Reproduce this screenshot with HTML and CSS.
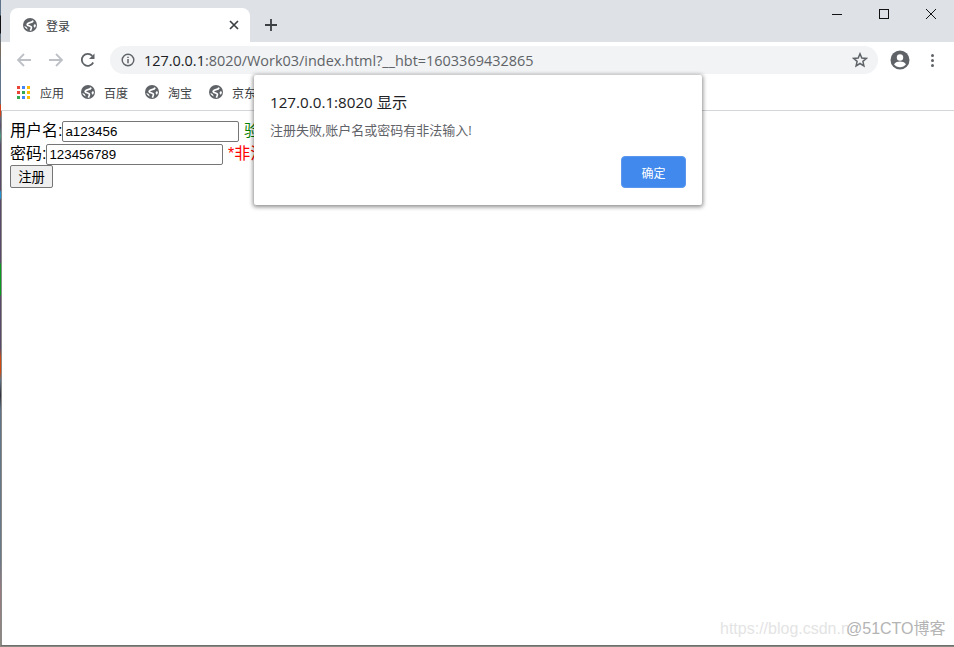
FILE: index.html
```html
<!DOCTYPE html>
<html lang="zh-CN">
<head>
    <meta charset="UTF-8">
    <title>登录</title>
    <link rel="stylesheet" href="styles.css">
</head>
<body>
    <div class="window">
        <div class="tabstrip">
            <div class="tab">
                <svg class="globe" viewBox="0 0 16 16"><circle cx="8" cy="8" r="8" fill="#5f6368"/><path d="M11.500 3C10.500 6 6.500 4.800 5 6.800 3.800 9 8 8.500 9.500 10.300 10.200 11.500 9 13 8.300 14.500" fill="none" stroke="#fff" stroke-width="2"/><path d="M13 7.200l1.800.5c0 1.300-.4 2.400-1.200 3.500-1-.5-1.500-1.300-1.500-2.200 0-.8.300-1.400.9-1.800zM1.500 9.500c1.700-.2 3.400.8 3.800 3.500-1.800-.6-3.200-1.900-3.800-3.500z" fill="#fff"/></svg>
                <span class="tab-title">登录</span>
                <svg class="tab-close" viewBox="0 0 10 10"><path d="M1 1l8 8M9 1l-8 8" stroke="#3c4043" stroke-width="1.700"/></svg>
            </div>
            <svg class="new-tab" viewBox="0 0 12 12"><path d="M6 0v12M0 6h12" stroke="#3c4043" stroke-width="1.800"/></svg>
            <div class="win-controls">
                <svg viewBox="0 0 12 12"><path d="M1 6.500h10" stroke="#111" stroke-width="1"/></svg>
                <svg viewBox="0 0 12 12"><rect x="1.500" y="1.500" width="9" height="9" fill="none" stroke="#111" stroke-width="1"/></svg>
                <svg viewBox="0 0 12 12"><path d="M1 1l10 10M11 1l-10 10" stroke="#111" stroke-width="1"/></svg>
            </div>
        </div>

        <div class="toolbar">
            <svg class="nav-icon" viewBox="0 0 16 16"><path d="M15 8H2M8 2L2 8l6 6" fill="none" stroke="#bdc1c6" stroke-width="1.800"/></svg>
            <svg class="nav-icon" viewBox="0 0 16 16"><path d="M1 8h13M8 2l6 6-6 6" fill="none" stroke="#bdc1c6" stroke-width="1.800"/></svg>
            <svg class="nav-icon" viewBox="0 0 16 16"><path d="M13.200 10.500A6 6 0 1 1 12.300 3.800" fill="none" stroke="#5f6368" stroke-width="1.800"/><path d="M14.500 1.500v5.500H9z" fill="#5f6368"/></svg>
            <div class="omnibox">
                <svg class="info" viewBox="0 0 14 14"><circle cx="7" cy="7" r="5.800" fill="none" stroke="#5f6368" stroke-width="1.400"/><path d="M7 6v4.200M7 3.700v1.400" stroke="#5f6368" stroke-width="1.500"/></svg>
                <span class="url">127.0.0.1<span class="url-rest">:8020/Work03/index.html?__hbt=1603369432865</span></span>
                <svg class="star" viewBox="0 0 16 16"><path d="M8 1.800l1.800 4.200 4.600.4-3.500 3 1 4.500L8 11.500l-3.900 2.400 1-4.500-3.500-3 4.600-.4z" fill="none" stroke="#5f6368" stroke-width="1.500"/></svg>
            </div>
            <svg class="avatar" viewBox="0 0 20 20"><circle cx="10" cy="10" r="9.500" fill="#5f6368"/><circle cx="10" cy="7.500" r="3.200" fill="#fff"/><path d="M4 14.200c1.400-2 3.700-2.700 6-2.700s4.600.7 6 2.700c-1.400 1.800-3.600 3-6 3s-4.600-1.200-6-3z" fill="#fff"/></svg>
            <div class="menu-dots"><i></i><i></i><i></i></div>
        </div>

        <div class="bookmarks">
            <div class="bookmark">
                <div class="apps">
                    <i class="c-r"></i><i class="c-b"></i><i class="c-y"></i>
                    <i class="c-r"></i><i class="c-g"></i><i class="c-y"></i>
                    <i class="c-g"></i><i class="c-b"></i><i class="c-y"></i>
                </div>
                <span>应用</span>
            </div>
            <div class="bookmark">
                <svg class="globe" viewBox="0 0 16 16"><circle cx="8" cy="8" r="8" fill="#5f6368"/><path d="M11.500 3C10.500 6 6.500 4.800 5 6.800 3.800 9 8 8.500 9.500 10.300 10.200 11.500 9 13 8.300 14.500" fill="none" stroke="#fff" stroke-width="2"/><path d="M13 7.200l1.800.5c0 1.300-.4 2.400-1.200 3.500-1-.5-1.500-1.300-1.500-2.200 0-.8.300-1.400.9-1.800zM1.500 9.500c1.700-.2 3.400.8 3.800 3.500-1.800-.6-3.200-1.900-3.800-3.500z" fill="#fff"/></svg>
                <span>百度</span>
            </div>
            <div class="bookmark">
                <svg class="globe" viewBox="0 0 16 16"><circle cx="8" cy="8" r="8" fill="#5f6368"/><path d="M11.500 3C10.500 6 6.500 4.800 5 6.800 3.800 9 8 8.500 9.500 10.300 10.200 11.500 9 13 8.300 14.500" fill="none" stroke="#fff" stroke-width="2"/><path d="M13 7.200l1.800.5c0 1.300-.4 2.400-1.200 3.500-1-.5-1.500-1.300-1.500-2.200 0-.8.300-1.400.9-1.800zM1.500 9.500c1.700-.2 3.400.8 3.800 3.500-1.800-.6-3.200-1.900-3.800-3.500z" fill="#fff"/></svg>
                <span>淘宝</span>
            </div>
            <div class="bookmark">
                <svg class="globe" viewBox="0 0 16 16"><circle cx="8" cy="8" r="8" fill="#5f6368"/><path d="M11.500 3C10.500 6 6.500 4.800 5 6.800 3.800 9 8 8.500 9.500 10.300 10.200 11.500 9 13 8.300 14.500" fill="none" stroke="#fff" stroke-width="2"/><path d="M13 7.200l1.800.5c0 1.300-.4 2.400-1.200 3.500-1-.5-1.500-1.300-1.500-2.200 0-.8.300-1.400.9-1.800zM1.500 9.500c1.700-.2 3.400.8 3.800 3.500-1.800-.6-3.200-1.900-3.800-3.500z" fill="#fff"/></svg>
                <span>京东</span>
            </div>
        </div>

        <div class="page">
            <form class="reg-form">
                <div class="row row-user">用户名:<input type="text" class="field field-user" value="a123456"> <span class="ok">验</span></div>
                <div class="row">密码:<input type="text" class="field field-pass" value="123456789"> <span class="err">*非法</span></div>
                <button type="button" class="submit">注册</button>
            </form>
            <div class="mark-csdn">https://blog.csdn.n</div>
            <div class="mark-cto">@51CTO博客</div>
        </div>

        <div class="dialog">
            <div class="dialog-title">127.0.0.1:8020 显示</div>
            <div class="dialog-msg">注册失败,账户名或密码有非法输入!</div>
            <div class="dialog-foot"><button type="button" class="ok-btn">确定</button></div>
        </div>
    </div>
</body>
</html>
```
FILE: styles.css
```css
* {
    margin: 0;
    padding: 0;
    box-sizing: border-box;
}

html, body {
    width: 954px;
    height: 647px;
    overflow: hidden;
}

body {
    padding: 0 0 1px 1px;
    font-family: "Liberation Sans", "Noto Sans CJK SC", sans-serif;
    background: linear-gradient(180deg, #5f7488 0, #5f7488 15px, #111 16px, #111 33px, #5f7488 34px, #7a6a5a 50px, #5f7488 70px, #5f7488 104px, #d0401a 105px, #d0401a 115px, #5f6a80 118px, #5a4a6a 126px, #4a9a80 136px, #5a4a6a 145px, #5a4a6a 190px, #2090d0 192px, #2090d0 198px, #5a4a6a 200px, #5a4a6a 263px, #0a9a20 264px, #0a9a20 295px, #5a4a6a 296px, #5a4a6a 348px, #d04a10 358px, #d04a10 372px, #5f7488 380px, #30303a 395px, #5f7488 410px, #6a7a88 560px, #9a7a80 590px, #8a8a80 647px);
}

.window {
    position: relative;
    display: flex;
    flex-direction: column;
    height: 100%;
    border-bottom: 1px solid #6e6e6e;
    background: #fff;
}

/* 탭 줄 */
.tabstrip {
    display: flex;
    align-items: flex-end;
    height: 42px;
    padding-left: 9px;
    background: #dee1e6;
}

.tab {
    display: flex;
    align-items: center;
    width: 240px;
    height: 34px;
    padding: 0 11px 0 13px;
    background: #fff;
    border-radius: 8px 8px 0 0;
}

.globe {
    width: 14px;
    height: 14px;
    flex: none;
}

.tab-title {
    margin-left: 9px;
    font-size: 12px;
    color: #3c4043;
}

.tab-close {
    width: 10px;
    height: 10px;
    margin-left: auto;
}

.new-tab {
    width: 12px;
    height: 12px;
    margin: 0 0 11px 15px;
}

.win-controls {
    display: flex;
    align-self: flex-start;
    gap: 35px;
    margin: 8px 17px 0 auto;
}

.win-controls svg {
    width: 12px;
    height: 12px;
}

/* 주소창 */
.toolbar {
    display: flex;
    align-items: center;
    height: 38px;
    padding: 0 0 2px 15px;
    background: #fff;
}

.nav-icon {
    width: 16px;
    height: 16px;
    margin-right: 16px;
}

.omnibox {
    display: flex;
    align-items: center;
    width: 768px;
    height: 28px;
    margin-left: -2px;
    padding: 0 10px 0 11px;
    background: #f1f3f4;
    border-radius: 14px;
}

.info {
    width: 14px;
    height: 14px;
}

.url {
    margin-left: 9px;
    font-family: "Open Sans", sans-serif;
    font-size: 14.450px;
    color: #202124;
    white-space: nowrap;
}

.url-rest {
    color: #5f6368;
}

.star {
    width: 16px;
    height: 16px;
    margin-left: auto;
}

.avatar {
    width: 20px;
    height: 20px;
    margin-left: 12px;
}

.menu-dots {
    display: flex;
    flex-direction: column;
    gap: 2px;
    margin-left: 21px;
}

.menu-dots i {
    width: 3px;
    height: 3px;
    background: #5f6368;
    border-radius: 50%;
}

/* 북마크 */
.bookmarks {
    display: flex;
    align-items: center;
    gap: 17px;
    height: 31px;
    padding: 0 0 6px 16px;
    background: #fff;
    border-bottom: 1px solid #d4d6d9;
}

.bookmark {
    display: flex;
    align-items: center;
    gap: 9px;
    font-size: 12px;
    color: #3c4043;
}

.apps {
    display: grid;
    grid-template-columns: repeat(3, 3px);
    gap: 2px;
    margin-right: 1px;
}

.apps i {
    width: 3px;
    height: 3px;
}

.c-r { background: #ea4335; }
.c-b { background: #4285f4; }
.c-y { background: #fbbc05; }
.c-g { background: #34a853; }

/* 페이지 */
.page {
    position: relative;
    flex: 1;
    padding: 10px 8px;
    background: #fff;
    border-left: 1px solid #8a8a8a;
}

.reg-form {
    font-size: 16px;
    line-height: 20px;
    color: #000;
}

.row {
    height: 21px;
    white-space: nowrap;
}

.row-user {
    height: 23px;
}

.field {
    width: 177px;
    height: 21px;
    padding: 1px 2px;
    font-family: "Liberation Sans", sans-serif;
    font-size: 13.330px;
    border: 1px solid #767676;
    border-radius: 2px;
    vertical-align: top;
}

.ok {
    color: #008000;
}

.err {
    color: #ff0000;
}

.submit {
    display: block;
    width: 43px;
    height: 23px;
    font-size: 13.330px;
    font-family: "Liberation Sans", "Noto Sans CJK SC", sans-serif;
    background: #efefef;
    border: 1px solid #767676;
    border-radius: 2px;
}

.mark-csdn {
    position: absolute;
    left: 718px;
    top: 509px;
    font-size: 16px;
    color: #e4e4e4;
}

.mark-cto {
    position: absolute;
    left: 844px;
    top: 504px;
    font-size: 16px;
    color: #b4b4b4;
}

/* 알림창 */
.dialog {
    position: absolute;
    left: 253px;
    top: 75px;
    display: flex;
    flex-direction: column;
    width: 448px;
    height: 130px;
    padding: 17px 16px 17px;
    background: #fff;
    border-radius: 2px;
    box-shadow: 0 1px 4px 1px rgba(0, 0, 0, 0.45);
}

.dialog-title {
    font-family: "Open Sans", "Noto Sans CJK SC", sans-serif;
    font-size: 15.200px;
    line-height: 20px;
    color: #202124;
}

.dialog-msg {
    margin-top: 9px;
    font-family: "Open Sans", "Noto Sans CJK SC", sans-serif;
    font-size: 13px;
    line-height: 18px;
    color: #5f6368;
}

.dialog-foot {
    display: flex;
    justify-content: flex-end;
    margin-top: auto;
}

.ok-btn {
    width: 65px;
    height: 32px;
    font-family: "Noto Sans CJK SC", sans-serif;
    font-size: 12px;
    color: #fff;
    background: #4189ec;
    border: 1px solid #5a97ef;
    border-radius: 4px;
}
```
